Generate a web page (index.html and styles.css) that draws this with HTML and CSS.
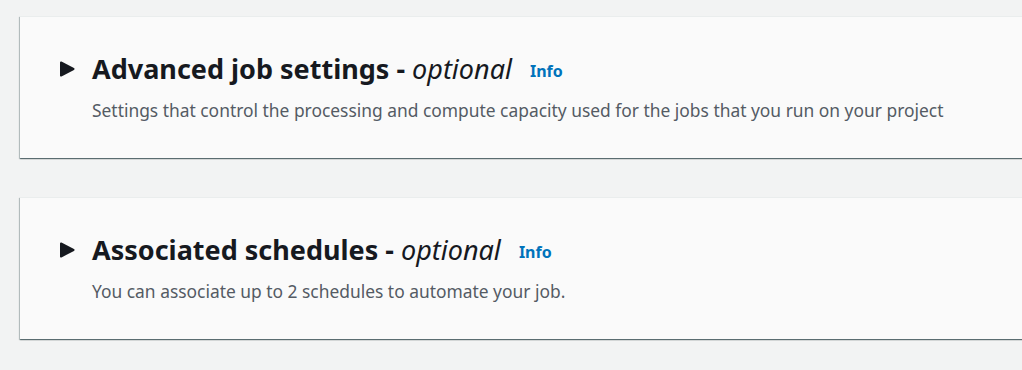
FILE: index.html
```html
<!DOCTYPE html>
<html lang="en">
<head>
  <meta charset="UTF-8" />
  <meta name="viewport" content="width=device-width, initial-scale=1.0"/>
  <title>Job settings</title>
  <link rel="stylesheet" href="styles.css">
</head>
<body>
  <div class="page">

    <div class="panel">
      <div class="panel-header">
        <svg class="caret" width="16" height="16" viewBox="0 0 16 16" aria-hidden="true">
          <path d="M2 1.5 L14.5 8 L2 14.5 Z" fill="#16191f" stroke="#16191f" stroke-width="2" stroke-linejoin="round"/>
        </svg>
        <div class="panel-text">
          <h2>Advanced job settings - <em>optional</em> <a href="#" class="info">Info</a></h2>
          <p>Settings that control the processing and compute capacity used for the jobs that you run on your project</p>
        </div>
      </div>
    </div>

    <div class="panel">
      <div class="panel-header">
        <svg class="caret" width="16" height="16" viewBox="0 0 16 16" aria-hidden="true">
          <path d="M2 1.5 L14.5 8 L2 14.5 Z" fill="#16191f" stroke="#16191f" stroke-width="2" stroke-linejoin="round"/>
        </svg>
        <div class="panel-text">
          <h2>Associated schedules - <em>optional</em> <a href="#" class="info">Info</a></h2>
          <p>You can associate up to 2 schedules to automate your job.</p>
        </div>
      </div>
    </div>

  </div>
</body>
</html>
```

FILE: styles.css
```css
body {
  font-family: "Noto Sans", "Open Sans", Arial, sans-serif;
  background: #f2f3f3;
  color: #16191f;
  margin: 0;
  padding: 0;
}
.page {
  padding: 16px 0 30px 20px;
  display: flex;
  flex-direction: column;
  gap: 39px;
  overflow: hidden;
}
.panel {
  width: calc(100% + 20px);
  background: #fafafa;
  box-shadow: 0 1px 1px 0 rgba(0,28,36,0.45), 1px 1px 1px 0 rgba(0,28,36,0.15), -1px 1px 1px 0 rgba(0,28,36,0.2);
  border-top: 1px solid #eaeded;
  padding: 36px 0 36px 39px;
  box-sizing: border-box;
}
.panel-header {
  display: flex;
  align-items: flex-start;
  gap: 17px;
}
.caret {
  margin-top: 8px;
  flex-shrink: 0;
}
.panel-text h2 {
  margin: 0;
  font-size: 27px;
  line-height: 32px;
  font-weight: 700;
  color: #16191f;
}
.panel-text h2 em {
  font-weight: 400;
}
.info {
  font-size: 16px;
  font-weight: 700;
  color: #0073bb;
  text-decoration: none;
  margin-left: 11px;
  vertical-align: 2px;
}
.panel-text p {
  margin: 11px 0 0;
  font-size: 17.4px;
  line-height: 24px;
  color: #545b64;
}
```
